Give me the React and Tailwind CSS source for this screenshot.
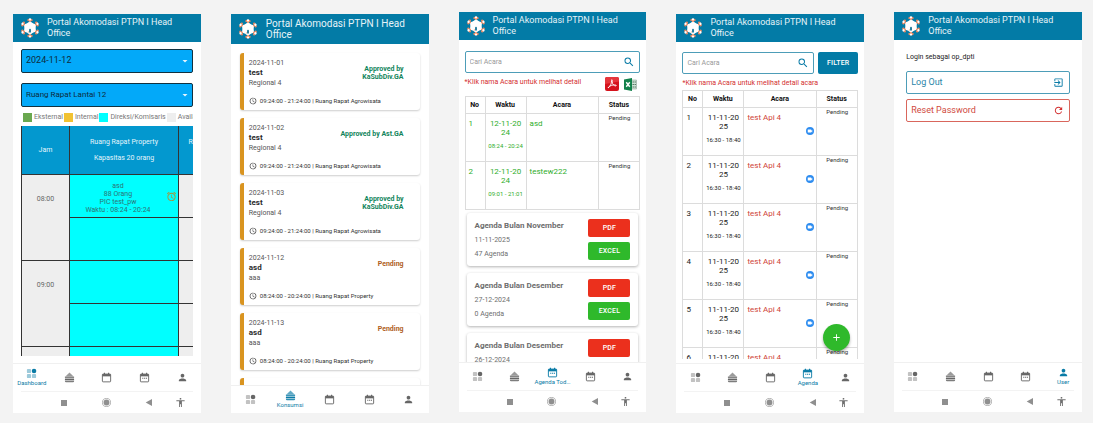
import React from "react";
import {
  MdArrowDropDown,
  MdSearch,
  MdPerson,
  MdAccessibility,
  MdAlarm,
  MdAccessTime,
  MdExitToApp,
  MdRefresh,
  MdAdd,
  MdVideocam,
} from "react-icons/md";

function Logo() {
  return (
    <svg viewBox="0 0 40 40" className="size-[20px] shrink-0" aria-hidden="true">
      {[0, 60, 120, 180, 240, 300].map((a) => (
        <g key={a} transform={`rotate(${a} 20 20)`}>
          <path d="M15 12 L20 4 L25 12Z" fill="#fff" />
          <path d="M14.500 5.500 Q14.500 1.500 17.500 1.500 H22.500 Q25.500 1.500 25.500 5.500 L22.500 6 L20 9 L17.500 6Z" fill="#ee8a63" />
          <circle cx="20" cy="2.800" r="2.300" fill="#fff" />
        </g>
      ))}
      <circle cx="20" cy="20" r="11.5" fill="#fff" />
      <path d="M18 29 V23.500 a2 2 0 0 1 4 0 V29Z" fill="#2b7f9f" />
      <path d="M14.500 29 h3 v-3z" fill="#e9a27f" />
    </svg>
  );
}

function GridIcon({ className }) {
  return (
    <svg viewBox="0 0 24 24" className={className} fill="currentColor" aria-hidden="true">
      <rect x="2" y="2" width="9" height="9" rx="2" opacity="0.4" />
      <rect x="2" y="13" width="9" height="9" rx="2" opacity="0.4" />
      <rect x="13" y="13" width="9" height="9" rx="2" opacity="0.4" />
      <circle cx="17.5" cy="6.5" r="5" />
    </svg>
  );
}

function BasketIcon({ className }) {
  return (
    <svg viewBox="0 0 24 24" className={className} fill="currentColor" aria-hidden="true">
      <path d="M12 1 L21 10 H3Z" opacity="0.65" />
      <path d="M2 10 H22 V13.500 H2Z" opacity="0.8" />
      <path d="M2 14.500 H22 V17.500 H2Z" />
      <path d="M2 18.500 H22 V20 Q22 22.500 19.500 22.500 H4.500 Q2 22.500 2 20Z" opacity="0.85" />
    </svg>
  );
}

function CalendarIcon({ className, dots = false }) {
  return (
    <svg viewBox="0 0 24 24" className={className} aria-hidden="true">
      <rect x="3" y="4.500" width="18" height="17" rx="1.500" fill="none" stroke="currentColor" strokeWidth="2" />
      <path d="M3 4.500 H21 V9.500 H3Z" fill="currentColor" />
      <path d="M7.500 1.500 V5 M16.500 1.500 V5" stroke="currentColor" strokeWidth="2.400" />
      {dots && <path d="M7 13.500 h2.500 M11 13.500 h2.500 M15 13.500 h2.500" stroke="currentColor" strokeWidth="2.400" />}
    </svg>
  );
}

function DottedCalendarIcon({ className }) {
  return <CalendarIcon className={className} dots />;
}

function PdfIcon() {
  return (
    <svg viewBox="0 0 28 28" className="size-[14px]" aria-hidden="true">
      <rect width="28" height="28" rx="4" fill="#d5121c" />
      <path d="M0 14 V4 a4 4 0 0 1 4-4 H24 a4 4 0 0 1 4 4 V9z" fill="#e5353b" />
      <path
        d="M6 22 C10 20 14 12 13 7 C12.500 4.500 15.500 5 14.500 9 C14 14 18 18 22 18 C24 17 21 15 16 16 C11 17 7 19 6 22Z"
        fill="none"
        stroke="#fff"
        strokeWidth="1.8"
        strokeLinejoin="round"
      />
    </svg>
  );
}

function ExcelIcon() {
  return (
    <svg viewBox="0 0 26 26" className="size-[13px]" aria-hidden="true">
      <rect x="13" y="4" width="12" height="18" fill="#cfe3d6" stroke="#7c8f83" strokeWidth="1" />
      <path d="M17 8h7M17 13h7M17 18h7" stroke="#5c7a68" strokeWidth="2.400" strokeDasharray="3 1" />
      <path d="M0 3 L16 0 V26 L0 23Z" fill="#12814a" />
      <path d="M4.500 8.500 L11.500 17.500 M11.500 8.500 L4.500 17.500" stroke="#fff" strokeWidth="2.800" />
    </svg>
  );
}

const TABS = [
  { name: "Dashboard", Icon: GridIcon },
  { name: "Konsumsi", Icon: BasketIcon },
  { name: "Agenda Tod…", Icon: CalendarIcon, ActiveIcon: DottedCalendarIcon },
  { name: "Agenda", Icon: DottedCalendarIcon },
  { name: "User", Icon: MdPerson },
];

function TabBar({ active }) {
  return (
    <nav className="grid h-7 shrink-0 grid-cols-5 border-t border-[#f0f0f0] bg-white">
      {TABS.map(({ name, Icon, ActiveIcon }) => {
        const on = name === active;
        const Glyph = on && ActiveIcon ? ActiveIcon : Icon;
        return (
          <button
            key={name}
            type="button"
            aria-label={name}
            className={`flex min-w-0 flex-col items-center justify-center ${on ? "text-[#0a7ba6]" : "text-[#666]"}`}
          >
            <Glyph className="size-[11px] shrink-0" />
            {on && <span className="text-[6px] leading-[8px] whitespace-nowrap">{name}</span>}
          </button>
        );
      })}
    </nav>
  );
}

function SystemBar() {
  return (
    <div className="mx-2 flex h-[22px] shrink-0 items-center border-t border-[#f3f3f3] pr-[7px] pl-[40px] text-[#8f8f8f]">
      <div className="flex flex-1 items-center justify-between">
        <svg viewBox="0 0 10 10" className="size-[6px]" fill="currentColor" aria-hidden="true">
          <rect width="10" height="10" />
        </svg>
        <svg viewBox="0 0 20 20" className="size-[9px]" fill="currentColor" aria-hidden="true">
          <circle cx="10" cy="10" r="9" fill="none" stroke="currentColor" strokeWidth="1.500" />
          <circle cx="10" cy="10" r="6.500" />
        </svg>
        <svg viewBox="0 0 10 10" className="size-[7px]" fill="currentColor" aria-hidden="true">
          <path d="M10 0 V10 L1 5Z" />
        </svg>
        <MdAccessibility className="-ml-3 size-[11px] text-[#707070]" />
      </div>
    </div>
  );
}

function Phone({ active, lower, large, children }) {
  return (
    <section
      className={`flex min-h-0 min-w-0 flex-col overflow-hidden bg-white ${lower ? "mt-0.5 -mb-px" : ""}`}
    >
      <header
        className={`flex shrink-0 items-center bg-[#037ba6] pl-[7px] text-[#e6f3f8] ${
          large ? "gap-2 py-1 text-[10px]" : "gap-[7px] py-[3px] text-[9px]"
        }`}
      >
        <Logo />
        <h1 className="leading-[11px]">
          Portal Akomodasi PTPN I Head
          <br />
          Office
        </h1>
      </header>
      <div className="relative flex min-h-0 flex-1 flex-col overflow-hidden">{children}</div>
      <TabBar active={active} />
      {!large && <SystemBar />}
    </section>
  );
}

function BlueSelect({ label, value, size }) {
  return (
    <div className="relative">
      <select
        aria-label={label}
        defaultValue={value}
        className={`block h-6 w-full appearance-none rounded-[2px] border border-[#12313f] bg-[#03a9f9] pl-1 text-[#0d2b3d] ${size}`}
      >
        <option>{value}</option>
      </select>
      <MdArrowDropDown className="pointer-events-none absolute top-1.5 right-0.5 size-3 text-[#e4f4fd]" />
    </div>
  );
}

const LEGEND = [
  ["Eksternal", "bg-[#6aa84f]"],
  ["Internal", "bg-[#f1c232]"],
  ["Direksi/Komisaris", "bg-[#00ffff]"],
  ["Available", "bg-[#eeeeee]"],
];

const LINE = "border border-[#333]";

function Dashboard() {
  return (
    <Phone active="Dashboard" lower>
      <div className="flex min-h-0 flex-1 flex-col px-2 pt-[7px] pb-[7px]">
        <div className="flex flex-col gap-[10px]">
          <BlueSelect label="Tanggal" value="2024-11-12" size="text-[9px]" />
          <BlueSelect label="Ruang" value="Ruang Rapat Lantai 12" size="text-[8px]" />
        </div>
        <ul className="mt-[5px] flex shrink-0 gap-px overflow-hidden pl-0.5 text-[7px] leading-[10px] whitespace-nowrap text-[#777]">
          {LEGEND.map(([name, color]) => (
            <li key={name} className="flex shrink-0 items-center gap-0.5">
              <span className={`size-[9px] ${color}`} />
              {name}
            </li>
          ))}
        </ul>
        <div className="mt-1 min-h-0 flex-1 overflow-hidden">
          <table className="w-[266px] table-fixed border-collapse text-center text-[7px] leading-[8px]">
            <colgroup>
              <col className="w-[48px]" />
              <col className="w-[109px]" />
              <col className="w-[109px]" />
            </colgroup>
            <thead>
              <tr className="h-12 bg-[#0398cf] text-[#e3f5fc]">
                <th className={`font-normal ${LINE} border-t-0`}>Jam</th>
                <th className={`font-normal ${LINE} border-t-0`}>
                  <p>Ruang Rapat Property</p>
                  <p className="mt-2">Kapasitas 20 orang</p>
                </th>
                <th className={`font-normal ${LINE} border-t-0`}>
                  <p>Ruang Rapat Agrowisata VIP</p>
                  <p className="mt-2">Kapasitas 20</p>
                </th>
              </tr>
            </thead>
            <tbody>
              {["08:00", "09:00", "10:00"].map((hour, i) => (
                <React.Fragment key={hour}>
                  <tr className="h-[43px]">
                    <td rowSpan={2} className={`bg-[#eee] pb-9 text-[#666] ${LINE}`}>
                      {hour}
                    </td>
                    <td className={`relative bg-[#00ffff] pt-1 text-[#2d7474] ${LINE}`}>
                      {i === 0 && (
                        <>
                          <p className="pr-3">
                            asd
                            <br />
                            88 Orang
                            <br />
                            PIC test_pw
                            <br />
                            Waktu : 08:24 - 20:24
                          </p>
                          <MdAlarm className="absolute top-4 right-px size-[11px] text-[#a8923a]" />
                        </>
                      )}
                    </td>
                    <td className={`bg-[#eee] ${LINE}`} />
                  </tr>
                  <tr className="h-[43px]">
                    <td className={`bg-[#00ffff] ${LINE}`} />
                    <td className={`bg-[#eee] ${LINE}`} />
                  </tr>
                </React.Fragment>
              ))}
            </tbody>
          </table>
        </div>
      </div>
    </Phone>
  );
}

const ORDERS = [
  ["2024-11-01", "test", "Regional 4", "09:24:00 - 21:24:00 | Ruang Rapat Agrowisata", "Approved by KaSubDiv.GA"],
  ["2024-11-02", "test", "Regional 4", "09:24:00 - 21:24:00 | Ruang Rapat Agrowisata", "Approved by Ast.GA"],
  ["2024-11-03", "test", "Regional 4", "09:24:00 - 21:24:00 | Ruang Rapat Agrowisata", "Approved by KaSubDiv.GA"],
  ["2024-11-12", "asd", "aaa", "08:24:00 - 20:24:00 | Ruang Rapat Property", "Pending"],
  ["2024-11-13", "asd", "aaa", "08:24:00 - 20:24:00 | Ruang Rapat Property", "Pending"],
  ["2024-11-14", "asd", "aaa", "08:24:00 - 20:24:00 | Ruang Rapat Property", "Pending"],
];

function Konsumsi() {
  return (
    <Phone active="Konsumsi" lower large>
      <div className="flex flex-col gap-2 px-[9px] pt-[9px]">
        {ORDERS.map(([date, title, unit, time, status]) => (
          <article
            key={date}
            className="h-[57px] shrink-0 rounded-[3px] border-l-4 border-[#d99420] bg-white pt-[5px] pl-[5px] shadow-[0_1px_2px_rgba(0,0,0,0.2)]"
          >
            <div className="flex h-[37px] justify-between">
              <div className="text-[7px] leading-[10px] text-[#555]">
                <p>{date}</p>
                <h2 className="text-[8px] font-bold text-[#2b2b2b]">{title}</h2>
                <p>{unit}</p>
              </div>
              <p
                className={`pt-[7px] pr-4 text-right text-[7px] leading-[8px] font-bold ${
                  status === "Pending" ? "text-[#b0601c]" : "text-[#11845b]"
                } ${status.endsWith("Ast.GA") ? "" : "max-w-[68px]"}`}
              >
                {status}
              </p>
            </div>
            <p className="flex items-center gap-[3px] text-[6px] leading-[12px] text-[#333]">
              <MdAccessTime className="size-[8px]" />
              {time}
            </p>
          </article>
        ))}
      </div>
    </Phone>
  );
}

function SearchBox({ id }) {
  return (
    <div className="flex h-[22px] min-w-0 flex-1 items-center rounded-[2px] border border-[#4d9db8] px-1">
      <input
        id={id}
        aria-label="Cari Acara"
        placeholder="Cari Acara"
        className="min-w-0 flex-1 bg-transparent text-[7px] outline-none placeholder:text-[#999]"
      />
      <MdSearch className="size-3 text-[#0a7ba6]" />
    </div>
  );
}

const CELL = "border border-[#dcdcdc] px-0 align-top";

function AgendaTable({ rows, tone, titleTone, call }) {
  return (
    <table className="w-full table-fixed border-collapse text-[8px] leading-[9px]">
      <colgroup>
        <col className="w-[20px]" />
        <col className="w-[41px]" />
        <col />
        <col className="w-[41px]" />
      </colgroup>
      <thead>
        <tr className="h-[17px] text-[7px] text-[#111]">
          {["No", "Waktu", "Acara", "Status"].map((h) => (
            <th key={h} className="border border-[#dcdcdc] p-0 pr-px text-center font-bold">
              {h}
            </th>
          ))}
        </tr>
      </thead>
      <tbody>
        {rows.map(([no, date1, date2, time, title]) => (
          <tr key={no} className={`h-12 ${tone}`}>
            <td className={`${CELL} pt-[5px] pl-[3px]`}>{no}</td>
            <td className={`${CELL} pt-[5px] text-center`}>
              {date1}
              <br />
              {date2}
              <p className="mt-1 text-[6px] leading-[9px] whitespace-nowrap">{time}</p>
            </td>
            <td className={`${CELL} pt-[5px] pl-[3px] ${titleTone}`}>
              {title}
              {call && (
                <span className="mt-[5px] mr-0.5 ml-auto flex size-2 items-center justify-center rounded-full bg-[#2d8cf0]">
                  <MdVideocam className="size-[6px] text-white" />
                </span>
              )}
            </td>
            <td className={`${CELL} text-center text-[6px] leading-[8px] text-[#333]`}>Pending</td>
          </tr>
        ))}
      </tbody>
    </table>
  );
}

const TODAY = [
  [1, "12-11-20", "24", "08:24 - 20:24", "asd"],
  [2, "12-11-20", "24", "09:01 - 21:01", "testew222"],
];

const MONTHS = [
  ["Agenda Bulan November", "11-11-2025", "47 Agenda"],
  ["Agenda Bulan Desember", "27-12-2024", "0 Agenda"],
  ["Agenda Bulan Desember", "26-12-2024", "0 Agenda"],
];

function AgendaToday() {
  return (
    <Phone active="Agenda Tod…">
      <div className="px-1.5 pt-[11px]">
        <div className="flex">
          <SearchBox id="search-today" />
        </div>
        <div className="mt-1 mb-[5px] flex h-[14px] items-center">
          <p className="flex-1 pb-1 text-[7px] leading-[8px] whitespace-nowrap text-[#d32f2f]">
            *Klik nama Acara untuk melihat detail
          </p>
          <div className="flex items-center gap-[5px] pr-[3px]">
            <button type="button" aria-label="Unduh PDF">
              <PdfIcon />
            </button>
            <button type="button" aria-label="Unduh Excel">
              <ExcelIcon />
            </button>
          </div>
        </div>
        <AgendaTable rows={TODAY} tone="text-[#2fae2b]" titleTone="" />
      </div>
      <div className="mt-[3px] flex flex-col gap-[7px] px-2">
        {MONTHS.map(([title, date, count]) => (
          <article
            key={date}
            className="flex h-[53px] shrink-0 justify-between rounded-[3px] bg-white px-2 pt-1.5 shadow-[0_1px_3px_rgba(0,0,0,0.3)]"
          >
            <div className="text-[7px] leading-[14px] text-[#6e6e6e]">
              <h2 className="text-[8px] font-bold whitespace-nowrap">{title}</h2>
              <p>{date}</p>
              <p>{count}</p>
            </div>
            <div className="flex w-[42px] flex-col gap-[5px] text-[7px] font-medium tracking-wide text-white">
              <button type="button" className="h-[18px] rounded-[2px] bg-[#eb301d]">
                PDF
              </button>
              <button type="button" className="h-[18px] rounded-[2px] bg-[#2fb92b]">
                EXCEL
              </button>
            </div>
          </article>
        ))}
      </div>
    </Phone>
  );
}

const AGENDA = [1, 2, 3, 4, 5, 6].map((n) => [n, "11-11-20", "25", "16:30 - 18:40", "test Api 4"]);

function Agenda() {
  return (
    <Phone active="Agenda" lower>
      <div className="flex min-h-0 flex-1 flex-col px-1.5 pt-[10px] pb-1">
        <div className="flex gap-1">
          <SearchBox id="search-agenda" />
          <button
            type="button"
            className="h-[22px] w-[40px] rounded-[2px] bg-[#037ba6] text-[7px] font-medium tracking-wide text-white"
          >
            FILTER
          </button>
        </div>
        <p className="mt-[5px] mb-[3px] text-[7px] leading-[8px] whitespace-nowrap text-[#d32f2f]">
          *Klik nama Acara untuk melihat detail acara
        </p>
        <div className="min-h-0 flex-1 overflow-hidden">
          <AgendaTable rows={AGENDA} tone="text-[#222]" titleTone="text-[#cf4437]" call />
        </div>
      </div>
      <button
        type="button"
        aria-label="Tambah agenda"
        className="absolute right-[14px] bottom-3 flex size-[27px] items-center justify-center rounded-full bg-[#2fb92b] text-white shadow-[0_2px_3px_rgba(0,0,0,0.3)]"
      >
        <MdAdd className="size-[11px]" />
      </button>
    </Phone>
  );
}

function User() {
  return (
    <Phone active="User">
      <div className="flex flex-col px-3 pt-3 text-[9px]">
        <p className="text-[7px] leading-[10px] text-[#222]">Login sebagai op_dpti</p>
        <button
          type="button"
          className="mt-[9px] flex h-[23px] items-center justify-between rounded-[2px] border border-[#4d9db8] pr-[5px] pl-1 text-[#2a86a8]"
        >
          Log Out
          <MdExitToApp className="size-[11px] text-[#0a7ba6]" />
        </button>
        <button
          type="button"
          className="mt-[5px] flex h-[23px] items-center justify-between rounded-[2px] border border-[#d9665c] pr-[5px] pl-1 text-[#d04a3e]"
        >
          Reset Password
          <MdRefresh className="size-[11px] text-[#d32f2f]" />
        </button>
      </div>
    </Phone>
  );
}

export default function App() {
  return (
    <main className="grid h-screen grid-cols-[188fr_198fr_188fr_188fr_188fr] grid-rows-[minmax(0,1fr)] gap-[30px] bg-[#f3f3f3] pt-3 pr-[11px] pb-[11px] pl-[13px] font-['Roboto',sans-serif]">
      <Dashboard />
      <Konsumsi />
      <AgendaToday />
      <Agenda />
      <User />
    </main>
  );
}
